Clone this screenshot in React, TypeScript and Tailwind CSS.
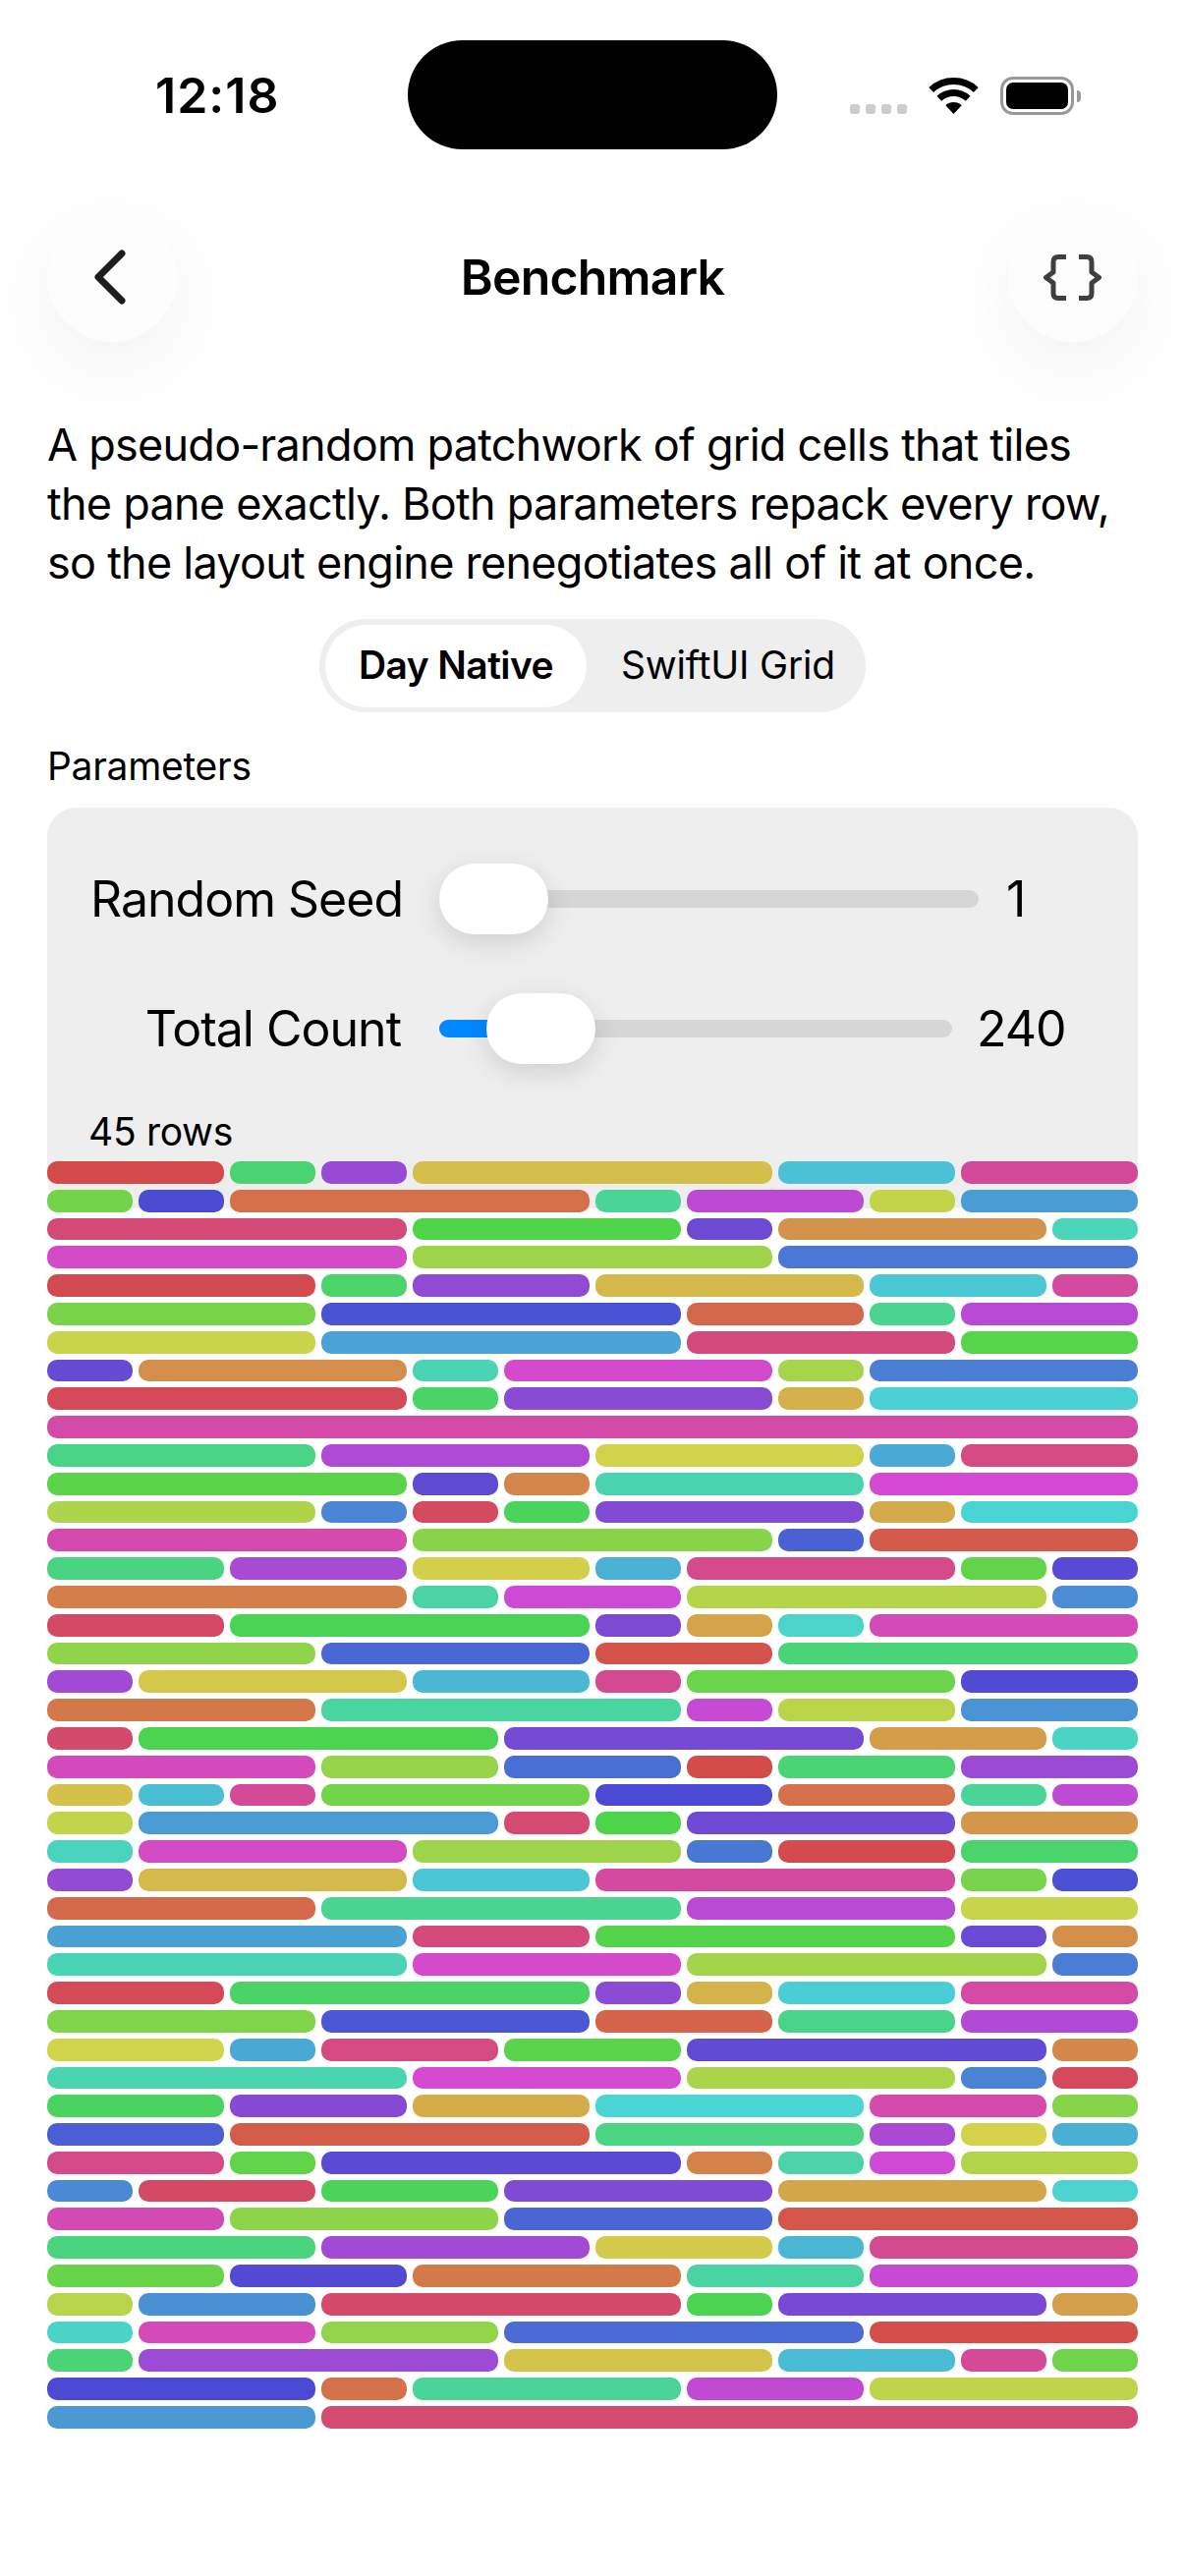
import clsx from 'clsx';

const SPAN: Record<number, string> = {
    1: 'col-span-1',
    2: 'col-span-2',
    3: 'col-span-3',
    4: 'col-span-4',
    9: 'col-span-9',
    12: 'col-span-12',
};

const ROWS = [
    [2, 1, 1, 4, 2, 2],
    [1, 1, 4, 1, 2, 1, 2],
    [4, 3, 1, 3, 1],
    [4, 4, 4],
    [3, 1, 2, 3, 2, 1],
    [3, 4, 2, 1, 2],
    [3, 4, 3, 2],
    [1, 3, 1, 3, 1, 3],
    [4, 1, 3, 1, 3],
    [12],
    [3, 3, 3, 1, 2],
    [4, 1, 1, 3, 3],
    [3, 1, 1, 1, 3, 1, 2],
    [4, 4, 1, 3],
    [2, 2, 2, 1, 3, 1, 1],
    [4, 1, 2, 4, 1],
    [2, 4, 1, 1, 1, 3],
    [3, 3, 2, 4],
    [1, 3, 2, 1, 3, 2],
    [3, 4, 1, 2, 2],
    [1, 4, 4, 2, 1],
    [3, 2, 2, 1, 2, 2],
    [1, 1, 1, 3, 2, 2, 1, 1],
    [1, 4, 1, 1, 3, 2],
    [1, 3, 3, 1, 2, 2],
    [1, 3, 2, 4, 1, 1],
    [3, 4, 3, 2],
    [4, 2, 4, 1, 1],
    [4, 3, 4, 1],
    [2, 4, 1, 1, 2, 2],
    [3, 3, 2, 2, 2],
    [2, 1, 2, 2, 4, 1],
    [4, 3, 3, 1, 1],
    [2, 2, 2, 3, 2, 1],
    [2, 4, 3, 1, 1, 1],
    [2, 1, 4, 1, 1, 1, 2],
    [1, 2, 2, 3, 3, 1],
    [2, 3, 3, 4],
    [3, 3, 2, 1, 3],
    [2, 2, 3, 2, 3],
    [1, 2, 4, 1, 3, 1],
    [1, 2, 2, 4, 3],
    [1, 4, 3, 2, 1, 1],
    [3, 1, 3, 2, 3],
    [3, 9],
];

// hue walks 137deg per cell, saturation and brightness stay fixed
function cellColor(index: number) {
    const h = (index * 137) % 360;
    const v = 0.83;
    const s = 0.65;
    const f = (n: number) => {
        const k = (n + h / 60) % 6;
        return Math.round(255 * (v - v * s * Math.max(0, Math.min(k, 4 - k, 1))));
    };
    return `rgb(${f(5)}, ${f(3)}, ${f(1)})`;
}

function Patchwork() {
    let index = 0;
    return (
        <div className="relative -mt-[48px] mx-[48px] flex h-[1290px] flex-col gap-[6px]">
            {ROWS.map((row, r) => {
                const cells = row.map((span) => ({ span, color: cellColor(index++) }));
                // the full-width row swallows three more cells
                if (r === 9) index += 3;
                return (
                    <div key={r} className="grid min-h-0 flex-1 grid-cols-12 gap-[6px]">
                        {cells.map((cell, c) => (
                            <div
                                key={c}
                                className={clsx('rounded-[10px]', SPAN[cell.span])}
                                style={{ backgroundColor: cell.color }}
                            />
                        ))}
                    </div>
                );
            })}
        </div>
    );
}

function Wifi() {
    return (
        <svg width="51" height="37" viewBox="0 0 51 37" fill="none" className="text-black">
            <path d="M2.7 12.5A33.5 33.5 0 0 1 48.3 12.5" stroke="currentColor" strokeWidth="7" />
            <path d="M10.8 21.3A21.5 21.5 0 0 1 40.2 21.3" stroke="currentColor" strokeWidth="7" />
            <path d="M25.5 37L17.3 28.2A12 12 0 0 1 33.7 28.2Z" fill="currentColor" />
        </svg>
    );
}

function StatusBar() {
    return (
        <div className="flex h-[152px] items-start pt-[41px]">
            <div className="flex h-[111px] w-[415px] items-center pl-[158px]">
                <span className="text-[50px] font-semibold leading-none tracking-[1px] text-black">12:18</span>
            </div>
            <div className="h-[111px] w-[376px] rounded-full bg-black" />
            <div className="flex items-end pl-[74px] pt-[37px]">
                <div className="mb-px flex gap-[6px]">
                    <div className="h-[10px] w-[10px] rounded-[3px] bg-[#cccccc]" />
                    <div className="h-[10px] w-[10px] rounded-[3px] bg-[#cccccc]" />
                    <div className="h-[10px] w-[10px] rounded-[3px] bg-[#cccccc]" />
                    <div className="h-[10px] w-[10px] rounded-[3px] bg-[#cccccc]" />
                </div>
                <div className="ml-[22px] mb-px">
                    <Wifi />
                </div>
                <div className="ml-[22px] flex items-center">
                    <div className="h-[39px] w-[75px] rounded-[13px] border-[3px] border-[#999999] p-[3px]">
                        <div className="h-full w-full rounded-[7px] bg-black" />
                    </div>
                    <div className="ml-[3px] h-[12px] w-[4px] rounded-r-full bg-[#999999]" />
                </div>
            </div>
        </div>
    );
}

function NavButton({ children }: { children: React.ReactNode }) {
    return (
        <div className="flex h-[132px] w-[132px] items-center justify-center rounded-full bg-[#fdfdfd] shadow-[0_24px_80px_rgba(0,0,0,0.06)]">
            {children}
        </div>
    );
}

function Slider({
    label,
    value,
    fill,
    valueClass,
}: {
    label: string;
    value: string;
    fill: string;
    valueClass: string;
}) {
    return (
        <div className="flex h-[72px] items-center">
            <span className="w-[316px] whitespace-nowrap text-right text-[50px] leading-none tracking-[-1px] text-black">
                {label}
            </span>
            <div className="relative ml-[39px] flex h-[72px] flex-1 items-center">
                <div className="h-[18px] w-full rounded-full bg-[#d6d6d6]" />
                <div
                    className={clsx(
                        'absolute left-0 top-[27px] h-[18px] rounded-l-full bg-[#0088ff]',
                        fill,
                    )}
                />
                <div
                    className={clsx(
                        'absolute top-0 h-[72px] w-[111px] rounded-full bg-white shadow-[0_8px_28px_rgba(0,0,0,0.13)]',
                        fill === 'w-[60px]' ? 'left-[48px]' : 'left-0',
                    )}
                />
            </div>
            <span className={clsx('text-[50px] leading-none tracking-[-1px] text-black', valueClass)}>
                {value}
            </span>
        </div>
    );
}

export default function App() {
    return (
        <div className="h-[2622px] w-[1206px] overflow-hidden bg-white font-['Inter',sans-serif] text-black">
            <StatusBar />

            <div className="mt-[64px] flex items-center justify-between px-[48px]">
                <NavButton>
                    <svg width="36" height="58" viewBox="0 0 36 58" fill="none" className="-ml-[4px]">
                        <path
                            d="M30 5L6 29L30 53"
                            stroke="#1c1c1e"
                            strokeWidth="7"
                            strokeLinecap="round"
                            strokeLinejoin="round"
                        />
                    </svg>
                </NavButton>
                <span className="text-[50px] font-semibold leading-none tracking-[-0.8px]">Benchmark</span>
                <NavButton>
                    <svg width="61" height="49" viewBox="0 0 61 49" fill="none">
                        <path
                            d="M24 3.5H16Q11 3.5 11 8.5V19L3.5 24.5L11 30V40.5Q11 45.5 16 45.5H24"
                            stroke="#3f3f3f"
                            strokeWidth="5"
                            strokeLinejoin="round"
                        />
                        <path
                            d="M37 3.5H45Q50 3.5 50 8.5V19L57.5 24.5L50 30V40.5Q50 45.5 45 45.5H37"
                            stroke="#3f3f3f"
                            strokeWidth="5"
                            strokeLinejoin="round"
                        />
                    </svg>
                </NavButton>
            </div>

            <p className="mt-[75px] px-[48px] text-[45px] leading-[60px] tracking-[-0.75px]">
                A pseudo-random patchwork of grid cells that tiles
                <br />
                the pane exactly. Both parameters repack every row,
                <br />
                so the layout engine renegotiates all of it at once.
            </p>

            <div className="mt-[27px] flex justify-center">
                <div className="flex h-[95px] w-[556px] items-center rounded-full bg-[#eeeeee] p-[6px]">
                    <div className="flex h-[84px] w-[266px] items-center justify-center rounded-full bg-white text-[39px] font-semibold tracking-[-0.6px]">
                        Day Native
                    </div>
                    <div className="flex-1 pl-[10px] text-center text-[39px] tracking-[-0.2px]">SwiftUI Grid</div>
                </div>
            </div>

            <div className="mt-[33px] px-[48px] text-[39px] leading-[44px] tracking-[-0.3px]">Parameters</div>

            <div className="mx-[48px] mt-[20px] h-[408px] rounded-[30px] bg-[#eeeeee] pl-[44px] pr-[74px] pt-[57px]">
                <Slider label="Random Seed" value="1" fill="w-0" valueClass="ml-[28px] w-[60px]" />
                <div className="mt-[60px]">
                    <Slider label="Total Count" value="240" fill="w-[60px]" valueClass="ml-[25px] w-[90px]" />
                </div>
                <div className="-ml-[2px] mt-[47px] text-[39px] leading-[44px] tracking-[-0.3px]">45 rows</div>
            </div>

            <Patchwork />
        </div>
    );
}
